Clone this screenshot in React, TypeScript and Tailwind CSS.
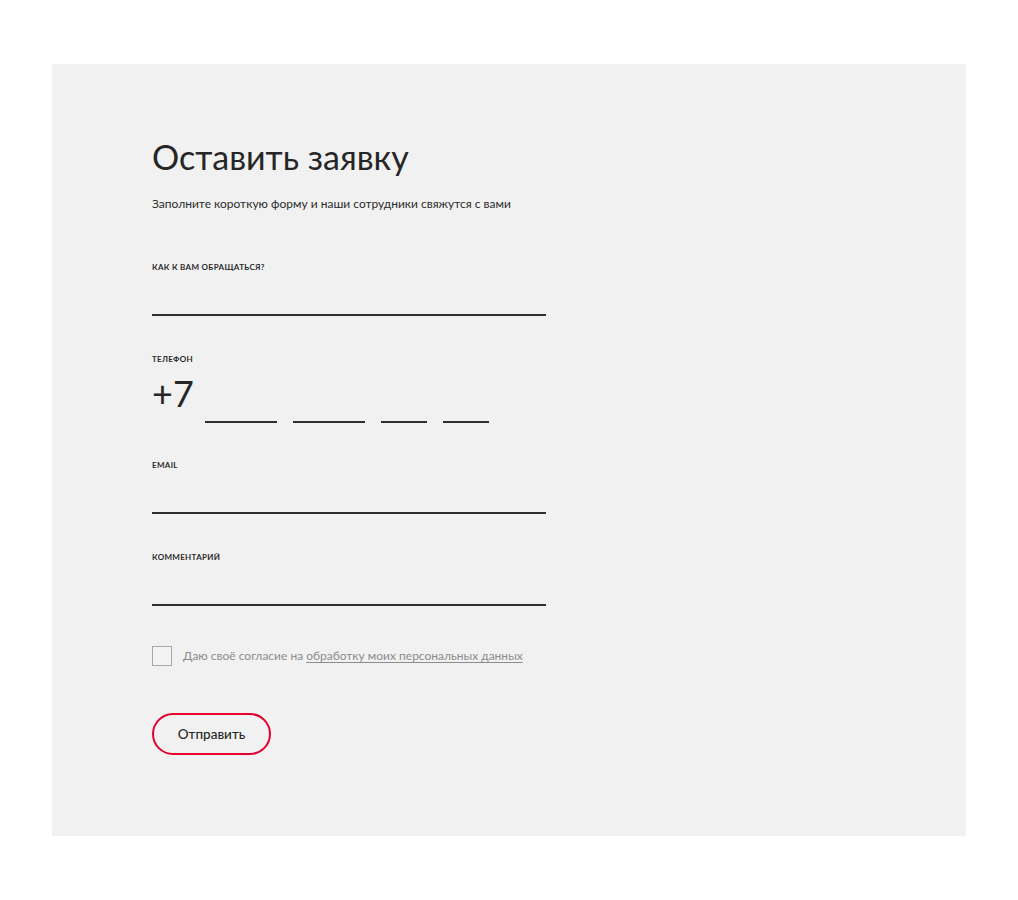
const Label = ({ children }: { children: string }) => (
  <div className="text-[8px] leading-[10px] font-bold tracking-[0.04em] text-[#2b2b2b]">{children}</div>
);

const Line = () => <div className="mt-[42px] w-[394px] border-b-2 border-[#2f2f2f]" />;

const App = () => (
  <div className="min-h-[900px] bg-white pt-[64px] pl-[52px] font-['Lato',sans-serif]">
    <div className="w-[914px] h-[772px] bg-[#f1f1f1] pl-[100px] pt-[73px]">
      <h1 className="text-[34px] leading-[40px] text-[#262626]">Оставить заявку</h1>
      <p className="mt-[19px] text-[12px] leading-[16px] text-[#2b2b2b]">
        Заполните короткую форму и наши сотрудники свяжутся с вами
      </p>

      <div className="mt-[50px]">
        <Label>КАК К ВАМ ОБРАЩАТЬСЯ?</Label>
        <Line />
      </div>

      <div className="mt-[38px]">
        <Label>ТЕЛЕФОН</Label>
        <div className="mt-[9px] flex items-start">
          <span className="text-[36px] leading-[40px] text-[#262626]">+7</span>
          <div className="ml-[11px] mt-[48px] flex gap-[16px]">
            <div className="w-[72px] border-b-2 border-[#2f2f2f]" />
            <div className="w-[72px] border-b-2 border-[#2f2f2f]" />
            <div className="w-[46px] border-b-2 border-[#2f2f2f]" />
            <div className="w-[46px] border-b-2 border-[#2f2f2f]" />
          </div>
        </div>
      </div>

      <div className="mt-[37px]">
        <Label>EMAIL</Label>
        <Line />
      </div>

      <div className="mt-[38px]">
        <Label>КОММЕНТАРИЙ</Label>
        <Line />
      </div>

      <label className="mt-[40px] flex items-center gap-[11px]">
        <span className="w-[20px] h-[20px] border border-[#a8a8a8] bg-[#f3f3f3]" />
        <span className="text-[12px] leading-[16px] text-[#8c8c8c]">
          Даю своё согласие на{" "}
          <a href="#" className="underline underline-offset-2">обработку моих персональных данных</a>
        </span>
      </label>

      <button className="mt-[47px] w-[119px] h-[42px] rounded-full border-2 border-[#e4002b] text-[13.5px] font-medium text-[#262626]">
        Отправить
      </button>
    </div>
  </div>
);

export default App;
